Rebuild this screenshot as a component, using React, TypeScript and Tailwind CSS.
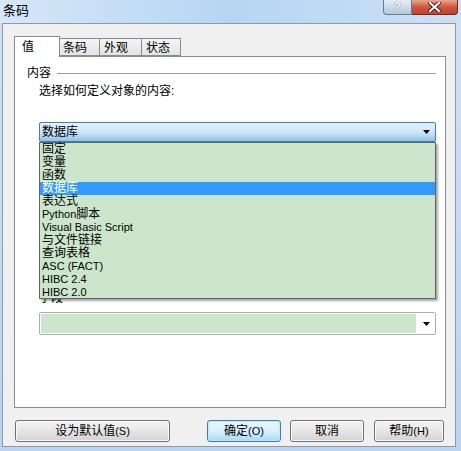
import React from "react";

const items: { label: React.ReactNode; key: string }[] = [
  { key: "fixed", label: "固定" },
  { key: "var", label: "变量" },
  { key: "func", label: "函数" },
  { key: "db", label: "数据库" },
  { key: "expr", label: "表达式" },
  { key: "py", label: <><span className="text-[11px]">Python</span>脚本</> },
  { key: "vbs", label: <span className="text-[11px]">Visual Basic Script</span> },
  { key: "file", label: "与文件链接" },
  { key: "query", label: "查询表格" },
  { key: "asc", label: <span className="text-[11px]">ASC (FACT)</span> },
  { key: "h24", label: <span className="text-[11px]">HIBC 2.4</span> },
  { key: "h20", label: <span className="text-[11px]">HIBC 2.0</span> },
];

const Arrow = () => (
  <svg width="7" height="4" viewBox="0 0 7 4" className="block">
    <path d="M0 0h7L3.5 4z" fill="#000" />
  </svg>
);

const WinButton: React.FC<{ label: React.ReactNode; width: string; primary?: boolean }> = ({
  label,
  width,
  primary,
}) => (
  <div
    className={`${width} h-[22px] rounded-[3px] border flex items-center justify-center text-[12px] leading-none text-black ${
      primary
        ? "border-[#3c7fb1] bg-linear-to-b from-[#eaf6fd] via-[#d9f0fc] to-[#a7d9f5] shadow-[inset_0_0_0_1px_#c2e4f6]"
        : "border-[#707070] bg-linear-to-b from-[#f4f4f4] via-[#e6e6e6] to-[#d2d2d2] shadow-[inset_0_0_0_1px_#fbfbfb]"
    }`}
  >
    {label}
  </div>
);

export default function App() {
  return (
    <div className="w-[461px] h-[451px] overflow-hidden bg-linear-to-b from-[#cfe2f6] to-[#bcd4ee] font-['Liberation_Sans','Noto_Sans_CJK_SC',sans-serif] text-black select-none">
      {/* title bar */}
      <div className="h-[23px] flex items-start justify-between pl-[3px] pr-[3px] bg-linear-to-r from-[#d6e7f8] via-[#b7d5f3] to-[#cbe0f5]">
        <div className="pt-[3px] text-[13px] leading-[16px]">条码</div>
        <div className="flex">
          <div className="w-[29px] h-[15px] rounded-bl-[4px] border border-t-0 border-[#6a7c94] bg-linear-to-b from-[#e4edf6] to-[#b6c8dc] flex items-center justify-center text-[12px] font-bold leading-none text-white [text-shadow:0_0_1px_#334]">
            ?
          </div>
          <div className="w-[46px] h-[15px] rounded-br-[4px] border border-t-0 border-l-0 border-[#6b2a22] bg-linear-to-b from-[#e8a493] via-[#d0553e] to-[#c5402c] flex items-center justify-center">
            <svg width="13" height="10" viewBox="0 0 13 10">
              <path d="M2 1l9 8M11 1l-9 8" stroke="#3b2a28" strokeWidth="4" strokeLinecap="square" />
              <path d="M2 1l9 8M11 1l-9 8" stroke="#fff" strokeWidth="2" strokeLinecap="square" />
            </svg>
          </div>
        </div>
      </div>

      {/* client area */}
      <div className="ml-[2px] mr-[5px] h-[424px] border border-[#8a99ab] bg-[#f0f0f0] pl-[11px] pt-[12px]">
        {/* tabs */}
        <div className="flex items-end h-[20px] text-[12px] leading-none">
          <div className="relative z-10 w-[46px] h-[21px] -mb-px border border-b-0 border-[#898c95] bg-white pl-[7px] pt-[4px]">
            值
          </div>
          <div className="w-[40px] h-[18px] border border-l-0 border-[#898c95] bg-linear-to-b from-[#f4f4f4] to-[#e4e4e4] pl-[3px] pt-[3px]">
            条码
          </div>
          <div className="w-[42px] h-[18px] border border-l-0 border-[#898c95] bg-linear-to-b from-[#f4f4f4] to-[#e4e4e4] pl-[4px] pt-[3px]">
            外观
          </div>
          <div className="w-[39px] h-[18px] border border-l-0 border-[#898c95] bg-linear-to-b from-[#f4f4f4] to-[#e4e4e4] pl-[4px] pt-[3px]">
            状态
          </div>
        </div>

        {/* panel */}
        <div className="w-[432px] h-[352px] border border-[#898c95] bg-white pl-[12px] text-[12px] leading-[13px]">
          <div className="mt-[10px] flex items-center pr-[9px]">
            <span>内容</span>
            <div className="flex-1 h-px bg-[#a0a0a0] ml-[6px]" />
          </div>
          <div className="pl-[12px]">
            <div className="mt-[5px]">选择如何定义对象的内容:</div>

            <div className="relative mt-[24px] w-[397px]">
              <div className="h-[20px] rounded-[2px] border border-[#3c7fb1] bg-linear-to-b from-[#e6f2fb] via-[#cfe5f7] to-[#8fc3ea] flex items-center pl-[2px] pr-[5px]">
                <span className="flex-1">数据库</span>
                <Arrow />
              </div>
              <div className="absolute left-0 top-full w-[397px] h-[157px] border border-[#646464] bg-[#cce6cc] shadow-[2px_2px_2px_rgba(0,0,0,0.35)] z-20">
                {items.map((it) => (
                  <div
                    key={it.key}
                    className={`h-[13px] leading-[13px] pl-[2px] whitespace-nowrap ${
                      it.key === "db" ? "bg-[#3399ff] text-white" : ""
                    }`}
                  >
                    {it.label}
                  </div>
                ))}
              </div>
            </div>

            <div className="mt-[150px]">字段</div>
            <div className="mt-[7px] w-[397px] h-[23px] rounded-[2px] border border-[#abadb3] flex">
              <div className="flex-1 m-px bg-[#cce6cc]" />
              <div className="w-[18px] flex items-center justify-center">
                <Arrow />
              </div>
            </div>
          </div>
        </div>

        {/* buttons */}
        <div className="mt-[12px] flex items-center pl-[1px]">
          <WinButton width="w-[155px]" label={<>设为默认值<span className="text-[11px]">(S)</span></>} />
          <div className="ml-[37px]">
            <WinButton width="w-[74px]" primary label={<>确定<span className="text-[11px]">(O)</span></>} />
          </div>
          <div className="ml-[9px]">
            <WinButton width="w-[74px]" label="取消" />
          </div>
          <div className="ml-[10px]">
            <WinButton width="w-[70px]" label={<>帮助<span className="text-[11px]">(H)</span></>} />
          </div>
        </div>
      </div>
    </div>
  );
}
